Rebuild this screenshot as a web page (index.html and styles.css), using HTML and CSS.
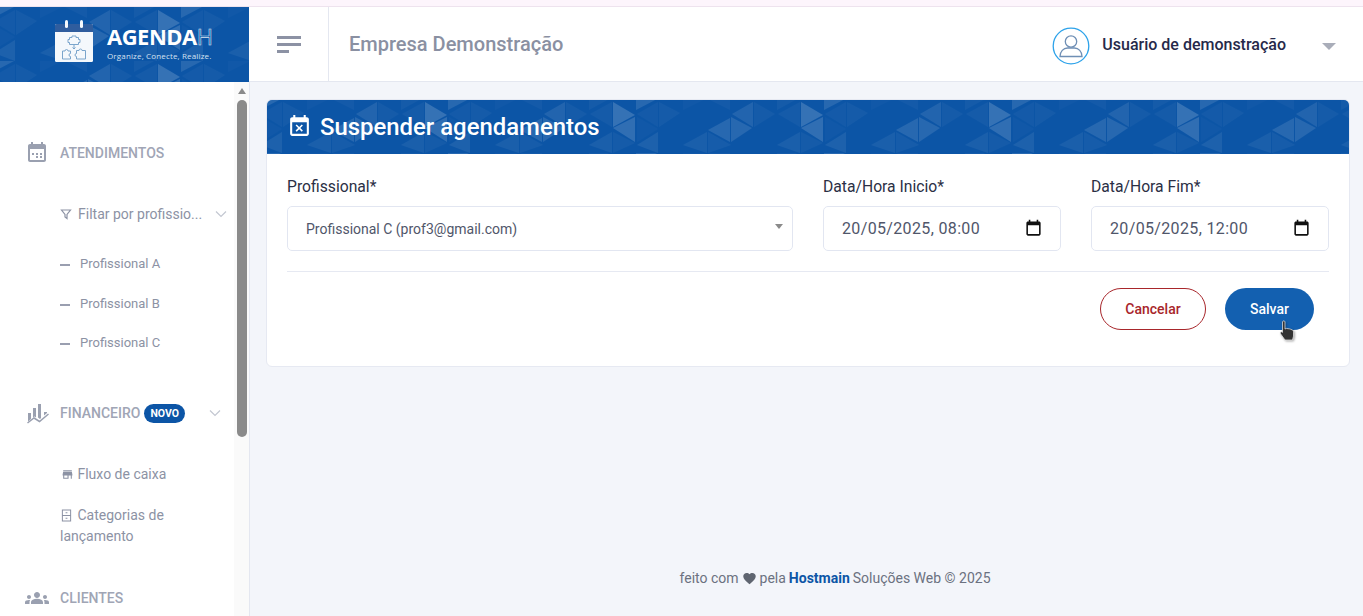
FILE: index.html
```html
<!DOCTYPE html>
<html lang="pt-BR">
<head>
    <meta charset="UTF-8">
    <meta name="viewport" content="width=device-width, initial-scale=1.0">
    <title>Suspender agendamentos</title>
    <link rel="stylesheet" href="styles.css">
</head>
<body>

<div class="top-strip"></div>

<header class="topbar">
    <div class="brand pattern">
        <svg class="brand-icon" viewBox="0 0 38 42" width="38" height="42">
            <rect x="0" y="4" width="38" height="38" rx="1.5" fill="#f4f8fc"/>
            <path d="M0 12V5.500A1.500 1.500 0 0 1 1.500 4H36.500A1.500 1.500 0 0 1 38 5.500V12Z" fill="#2f5d9e"/>
            <rect x="10" y="0" width="3" height="8" rx="1.500" fill="#f4f8fc"/>
            <rect x="25" y="0" width="3" height="8" rx="1.500" fill="#f4f8fc"/>
            <g fill="none" stroke="#7aa5cc" stroke-width="1">
                <path d="M17 17.500v-1.500h4v1.500h2.500v2h1.500v3h-1.500v2h-9v-2H13v-3h1.500v-2z"/>
                <path d="M7.500 31h2.500a1.500 1.500 0 1 1 3 0h2.500v2.500a1.500 1.500 0 1 0 0 3V39H7.500z"/>
                <path d="M21.500 30.500h2.500a1.500 1.500 0 1 1 3 0h3.500V39h-9v-2.500a1.500 1.500 0 1 1 0-3z"/>
                <path d="M19 25v4m-1.500-1.500L19 29l1.500-1.500"/>
            </g>
        </svg>
        <div class="brand-text">
            <div class="brand-name">AGENDA<span class="brand-h">H</span></div>
            <div class="brand-tag">Organize, Conecte, Realize.</div>
        </div>
    </div>
    <button class="menu-btn" aria-label="Menu">
        <span class="bar-long"></span>
        <span class="bar-long"></span>
        <span class="bar-short"></span>
    </button>
    <div class="company">Empresa Demonstração</div>
    <div class="user">
        <svg class="user-icon" viewBox="0 0 38 38" width="38" height="38">
            <circle cx="19" cy="19" r="17.800" fill="#fff" stroke="#2ea3ea" stroke-width="1.300"/>
            <circle cx="19" cy="14.500" r="5.700" fill="none" stroke="#6f8fb5" stroke-width="1.300"/>
            <path d="M8 29.500c0-5 3.500-8.500 7.500-8.500h7c4 0 7.500 3.500 7.500 8.500z" fill="none" stroke="#6f8fb5" stroke-width="1.300"/>
        </svg>
        <span class="user-name">Usuário de demonstração</span>
        <span class="user-caret"></span>
    </div>
</header>

<div class="shell">
    <aside class="sidebar">
        <nav class="nav">
            <div class="nav-title nav-title-first">
                <svg class="nav-icon" viewBox="0 0 24 24" width="24" height="24"><path d="M19 3h-1V1h-2v2H8V1H6v2H5C3.900 3 3 3.900 3 5v14c0 1.100.9 2 2 2h14c1.100 0 2-.9 2-2V5c0-1.100-.9-2-2-2zm0 16H5V8h14v11zM11 12h2v2h-2zM15 12h2v2h-2zM7 12h2v2H7zM11 15h2v2h-2zM15 15h2v2h-2z" fill="#9aa0b0"/></svg>
                <span>ATENDIMENTOS</span>
            </div>
            <div class="nav-filter">
                <svg class="filter-icon" viewBox="0 0 12 12" width="12" height="12"><path d="M1.500 2h9L7 6.500V10.500L5 9V6.500Z" fill="none" stroke="#8c92a4" stroke-width="1.200"/></svg>
                <span class="filter-text">Filtar por profissio...</span>
                <svg class="chevron" viewBox="0 0 12 8" width="12" height="8"><path d="M1 1.500l5 5 5-5" fill="none" stroke="#c3c7d1" stroke-width="1.200"/></svg>
            </div>
            <div class="nav-sub">Profissional A</div>
            <div class="nav-sub">Profissional B</div>
            <div class="nav-sub">Profissional C</div>

            <div class="nav-title nav-title-fin">
                <svg class="nav-icon" viewBox="0 0 24 24" width="24" height="24">
                    <path d="M3 12h3v6l-3 2.500zM8 7h3v9.500L9.500 15.500 8 16.500zM13 3h3v14l-1 1-2-1.500zM19 11h3v1l-3 2.500z" fill="#9aa0b0"/>
                    <path d="M2.500 22l6.500-5 5.500 3.500L23.500 13" fill="none" stroke="#9aa0b0" stroke-width="1.500"/>
                </svg>
                <span>FINANCEIRO</span>
                <span class="badge">NOVO</span>
                <svg class="chevron chevron-fin" viewBox="0 0 12 8" width="12" height="8"><path d="M1 1.500l5 5 5-5" fill="none" stroke="#c3c7d1" stroke-width="1.200"/></svg>
            </div>
            <div class="nav-link nav-link-first">
                <svg class="link-icon" viewBox="0 0 24 24" width="13" height="13"><path d="M20 4H4v2h16V4zm1 10v-2l-1-5H4l-1 5v2h1v6h10v-6h4v6h2v-6h1zm-9 4H6v-4h6v4z" fill="#8c92a4"/></svg>
                Fluxo de caixa
            </div>
            <div class="nav-link">
                <svg class="link-icon link-icon-cat" viewBox="0 0 12 14" width="11" height="13"><path d="M1.500 1h9v12h-9zM1.500 7h9M5 4h2M5 10h2" fill="none" stroke="#8c92a4" stroke-width="1.100"/></svg>
                Categorias de lançamento
            </div>

            <div class="nav-title nav-title-cli">
                <svg class="nav-icon" viewBox="0 0 24 24" width="24" height="24"><path d="M12 12.750c1.630 0 3.070.39 4.240.9 1.080.48 1.760 1.560 1.760 2.730V18H6v-1.610c0-1.180.68-2.260 1.760-2.730 1.170-.52 2.610-.91 4.240-.91zM4 13c1.100 0 2-.9 2-2s-.9-2-2-2-2 .9-2 2 .9 2 2 2zm1.130 1.100c-.37-.06-.74-.1-1.130-.1-.99 0-1.930.21-2.780.58C.48 14.900 0 15.620 0 16.430V18h4.500v-1.610c0-.83.23-1.610.63-2.290zM20 13c1.100 0 2-.9 2-2s-.9-2-2-2-2 .9-2 2 .9 2 2 2zm4 3.430c0-.81-.48-1.530-1.220-1.850-.85-.37-1.790-.58-2.780-.58-.39 0-.76.04-1.130.1.4.68.63 1.460.63 2.290V18H24v-1.570zM12 6c1.660 0 3 1.340 3 3s-1.340 3-3 3-3-1.340-3-3 1.340-3 3-3z" fill="#9aa0b0"/></svg>
                <span>CLIENTES</span>
            </div>
        </nav>
        <div class="side-scroll">
            <span class="side-arrow"></span>
            <span class="side-thumb"></span>
        </div>
    </aside>

    <main class="main">
        <section class="card">
            <div class="card-header pattern">
                <svg viewBox="0 0 24 24" width="25" height="25"><path d="M9.310 17l2.440-2.440L14.190 17l1.060-1.060-2.440-2.440 2.440-2.440L14.190 10l-2.440 2.440L9.310 10l-1.060 1.060 2.440 2.440-2.440 2.440L9.310 17zM19 3h-1V1h-2v2H8V1H6v2H5c-1.110 0-1.990.9-1.990 2L3 19c0 1.100.89 2 2 2h14c1.100 0 2-.9 2-2V5c0-1.100-.9-2-2-2zm0 16H5V8h14v11z" fill="#fff"/></svg>
                <h1>Suspender agendamentos</h1>
            </div>
            <div class="card-body">
                <div class="form-row">
                    <div class="field field-grow">
                        <label>Profissional*</label>
                        <div class="control control-select">
                            <span>Profissional C (prof3@gmail.com)</span>
                            <span class="select-caret"></span>
                        </div>
                    </div>
                    <div class="field field-date">
                        <label>Data/Hora Inicio*</label>
                        <div class="control control-date">
                            <span>20/05/2025, 08:00</span>
                            <svg viewBox="0 0 24 24" width="19" height="19"><path d="M19 3h-1V1h-2v2H8V1H6v2H5C3.900 3 3 3.900 3 5v14c0 1.100.9 2 2 2h14c1.100 0 2-.9 2-2V5c0-1.100-.9-2-2-2zm0 16H5V8h14v11z" fill="#111"/></svg>
                        </div>
                    </div>
                    <div class="field field-date">
                        <label>Data/Hora Fim*</label>
                        <div class="control control-date">
                            <span>20/05/2025, 12:00</span>
                            <svg viewBox="0 0 24 24" width="19" height="19"><path d="M19 3h-1V1h-2v2H8V1H6v2H5C3.900 3 3 3.900 3 5v14c0 1.100.9 2 2 2h14c1.100 0 2-.9 2-2V5c0-1.100-.9-2-2-2zm0 16H5V8h14v11z" fill="#111"/></svg>
                        </div>
                    </div>
                </div>
                <div class="actions">
                    <button class="btn btn-cancel">Cancelar</button>
                    <button class="btn btn-save">Salvar</button>
                </div>
            </div>
        </section>
        <footer class="footer">
            feito com
            <svg viewBox="0 0 24 24" width="15" height="15"><path d="M12 21.350l-1.450-1.320C5.400 15.360 2 12.280 2 8.500 2 5.420 4.420 3 7.500 3c1.740 0 3.410.81 4.500 2.090C13.090 3.810 14.760 3 16.500 3 19.580 3 22 5.420 22 8.500c0 3.780-3.400 6.860-8.550 11.540L12 21.350z" fill="#5f6570"/></svg>
            pela <b>Hostmain</b> Soluções Web © 2025
        </footer>
    </main>
</div>

<!-- ponteiro do mouse que aparece na captura -->
<svg class="mouse-hand" viewBox="0 0 17 21" width="17" height="21">
    <path d="M3.500 1.800c.2-1.200 2.300-1.200 2.500 0V9l1.500-.6 1.500.3 1.300.1 1.500.5 1.300.5c1 .4 1.400 1.200 1.400 2.300v4L13.500 20H6l-4.300-6c-.7-1-.3-2.200.7-2.200.4 0 .8.200 1.100.6z" fill="#333" stroke="#eee" stroke-width=".7"/>
</svg>

</body>
</html>
```

FILE: styles.css
```css
* {
    box-sizing: border-box;
}

html, body {
    height: 616px;
    overflow: hidden;
}

body {
    margin: 0;
    background-color: #f3f5fa;
    color: #2b2f45;
    font-family: Roboto, "Liberation Sans", sans-serif;
    display: flex;
    flex-direction: column;
}

/* Fundo azul com triangulos */
.pattern {
    background-color: #0c55a6;
    background-image: url("data:image/svg+xml,%3Csvg xmlns='http://www.w3.org/2000/svg' width='188' height='54'%3E%3Cg fill='white'%3E%3Cpath d='M0 3L22 16L0 28Z' fill-opacity='.17'/%3E%3Cpath d='M22 18L0 29L22 43Z' fill-opacity='.15'/%3E%3Cpath d='M23 11V0H44Z' fill-opacity='.11'/%3E%3Cpath d='M46 3L67 14L46 28Z' fill-opacity='.035'/%3E%3Cpath d='M45 3L24 15L45 28Z' fill-opacity='.03'/%3E%3Cpath d='M24 18V43L45 30Z' fill-opacity='.02'/%3E%3Cpath d='M45 33L24 46L45 54Z' fill-opacity='.07'/%3E%3Cpath d='M0 33L22 44L0 54Z' fill-opacity='.035'/%3E%3Cpath d='M117 19L95 31L117 43Z' fill-opacity='.11'/%3E%3Cpath d='M118 18L139 29L118 43Z' fill-opacity='.11'/%3E%3Cpath d='M140 3L119 15L140 28Z' fill-opacity='.09'/%3E%3Cpath d='M141 3L162 15L141 28Z' fill-opacity='.035'/%3E%3Cpath d='M94 33L70 46L94 54Z' fill-opacity='.06'/%3E%3Cpath d='M95 33L118 46L95 54Z' fill-opacity='.045'/%3E%3Cpath d='M187 3L165 15L187 28Z' fill-opacity='.035'/%3E%3Cpath d='M187 33L164 46L187 54Z' fill-opacity='.06'/%3E%3Cpath d='M70 0V11L92 0Z' fill-opacity='.02'/%3E%3Cpath d='M117 0H95L117 11Z' fill-opacity='.03'/%3E%3Cpath d='M164 0V11L184 0Z' fill-opacity='.035'/%3E%3C/g%3E%3C/svg%3E");
    background-position: 158px 0;
}

.top-strip {
    height: 7px;
    flex: none;
    background-color: #fdf5fc;
    border-bottom: 1px solid #eee3ee;
}

/* Barra superior */
.topbar {
    height: 75px;
    flex: none;
    display: flex;
    align-items: center;
    background-color: white;
    border-bottom: 1px solid #e4e7f0;
}

.brand {
    width: 249px;
    height: 75px;
    flex: none;
    display: flex;
    align-items: center;
    gap: 14px;
    padding: 0 0 0 55px;
}

.brand-icon {
    margin-bottom: 7px;
}

.brand-text {
    margin-bottom: 4px;
}

.brand-name {
    color: white;
    font-family: "Open Sans", sans-serif;
    font-weight: 700;
    font-size: 22px;
    line-height: 27px;
    letter-spacing: -.5px;
}

.brand-h {
    color: #0c55a6;
    font-weight: 400;
    -webkit-text-stroke: .6px #dbe6f3;
}

.brand-tag {
    color: #d5e2f1;
    font-family: "Open Sans", sans-serif;
    font-size: 8px;
    line-height: 11px;
    letter-spacing: .15px;
    white-space: nowrap;
}

.menu-btn {
    width: 80px;
    height: 74px;
    flex: none;
    padding: 0 0 0 28px;
    background: none;
    border: none;
    border-right: 1px solid #e4e7f0;
    display: flex;
    flex-direction: column;
    align-items: flex-start;
    justify-content: center;
    gap: 4px;
}

.bar-long, .bar-short {
    display: block;
    height: 3px;
    background-color: #8c92a4;
}

.bar-long {
    width: 24px;
}

.bar-short {
    width: 12px;
}

.company {
    margin-left: 20px;
    color: #8a90a2;
    font-size: 20px;
    font-weight: 500;
}

.user {
    margin-left: auto;
    display: flex;
    align-items: center;
    padding-right: 27px;
}

.user-icon {
    margin-top: 3px;
}

.user-name {
    margin-left: 12px;
    color: #26294a;
    font-size: 16px;
    font-weight: 500;
}

.user-caret {
    margin: 4px 0 0 36px;
    border-left: 7px solid transparent;
    border-right: 7px solid transparent;
    border-top: 7px solid #a9adb9;
}

/* Estrutura */
.shell {
    flex: 1;
    display: flex;
    min-height: 0;
}

/* Menu lateral */
.sidebar {
    position: relative;
    width: 250px;
    flex: none;
    overflow: hidden;
    background-color: white;
    border-right: 1px solid #e4e7f0;
}

.nav {
    width: 235px;
    padding-left: 27px;
    color: #8c92a4;
}

.nav-title {
    display: flex;
    align-items: center;
    height: 24px;
    color: #a0a5b5;
    font-size: 14px;
    font-weight: 500;
}

.nav-title-first {
    margin-top: 59px;
}

.nav-title-fin {
    margin-top: 48px;
}

.nav-title-cli {
    margin-top: 39px;
}

.nav-icon {
    flex: none;
    margin: 0 11px 0 -2px;
}

.nav-filter {
    display: flex;
    align-items: center;
    margin-top: 37px;
    padding-left: 33px;
    height: 24px;
    font-size: 14px;
    white-space: nowrap;
}

.filter-icon {
    margin-right: 6px;
}

.chevron {
    margin-left: 13px;
}

.chevron-fin {
    margin-left: 24px;
}

.nav-sub {
    position: relative;
    margin-left: 33px;
    padding-left: 20px;
    height: 20px;
    line-height: 20px;
    font-size: 13px;
    margin-top: 19.500px;
}

.nav-filter + .nav-sub {
    margin-top: 28px;
}

.nav-sub::before {
    content: "";
    position: absolute;
    left: 0;
    top: 10px;
    width: 10px;
    height: 2px;
    background-color: #9a9fb0;
}

.badge {
    margin-left: 4px;
    height: 19px;
    padding: 0 6px;
    border-radius: 10px;
    background-color: #0c55a6;
    color: white;
    font-size: 10.500px;
    font-weight: 700;
    line-height: 19px;
}

.nav-link {
    margin: 20px 0 0 33px;
    width: 130px;
    font-size: 14px;
    line-height: 21px;
}

.nav-link-first {
    margin-top: 39px;
    width: 140px;
}

.link-icon {
    vertical-align: -2px;
    margin: 0 0 0 1px;
}

.link-icon-cat {
    margin-right: 2px;
}

.side-scroll {
    position: absolute;
    top: 0;
    right: 0;
    bottom: 0;
    width: 15px;
    background-color: #fafafa;
}

.side-arrow {
    position: absolute;
    top: 6px;
    left: 4px;
    border-left: 4.500px solid transparent;
    border-right: 4.500px solid transparent;
    border-bottom: 6px solid #8a8a8a;
}

.side-thumb {
    position: absolute;
    top: 18px;
    left: 3px;
    width: 10px;
    height: 337px;
    border-radius: 5px;
    background-color: #8a8a8a;
}

/* Conteudo */
.main {
    flex: 1;
    display: flex;
    flex-direction: column;
    padding: 17px 13px 0 16px;
    min-width: 0;
}

.card {
    height: 268px;
    background-color: white;
    border: 1px solid #e6e9f2;
    border-radius: 6px;
    overflow: hidden;
}

.card-header {
    height: 55px;
    display: flex;
    align-items: center;
    gap: 8px;
    margin: -1px -1px 0;
    padding-left: 21px;
    color: white;
    background-position: 159px 0;
}

.card-header h1 {
    margin: 0;
    font-size: 23.900px;
    font-weight: 500;
}

.card-body {
    padding: 22px 20px 0;
}

.form-row {
    display: flex;
    gap: 30px;
    padding-bottom: 20px;
    border-bottom: 1px solid #e6e9f2;
}

.field-grow {
    flex: 1;
}

.field-date {
    width: 238px;
    flex: none;
}

.field label {
    display: block;
    margin-bottom: 8px;
    color: #2b2f45;
    font-size: 15.700px;
    line-height: 22px;
}

.control {
    display: flex;
    align-items: center;
    justify-content: space-between;
    height: 45px;
    background-color: white;
    border: 1px solid #e2e6f1;
    border-radius: 5px;
    color: #50566a;
}

.control-select {
    padding: 0 9px 0 18px;
    font-size: 14px;
}

.select-caret {
    margin-bottom: 4px;
    border-left: 4px solid transparent;
    border-right: 4px solid transparent;
    border-top: 5px solid #8a8a8a;
}

.control-date {
    padding: 0 17px 0 18px;
    font-size: 16px;
    letter-spacing: .35px;
}

.actions {
    display: flex;
    justify-content: flex-end;
    gap: 19px;
    padding: 16px 15px 0 0;
}

.btn {
    height: 42px;
    border-radius: 21px;
    font-family: inherit;
    font-size: 14px;
    font-weight: 500;
}

.btn-cancel {
    width: 106px;
    background-color: white;
    border: 1px solid #a8262b;
    color: #a8262b;
}

.btn-save {
    width: 89px;
    background-color: #1360b0;
    border: none;
    color: white;
}

.footer {
    margin-top: auto;
    height: 47px;
    padding-left: 54px;
    display: flex;
    justify-content: center;
    align-items: flex-start;
    gap: 3px;
    color: #6b7180;
    font-size: 14px;
    line-height: 18px;
}

.footer svg {
    margin-top: 2px;
}

.footer b {
    color: #0c55a6;
    font-weight: 700;
}

/* Cursor do mouse */
.mouse-hand {
    position: absolute;
    left: 1279px;
    top: 320px;
    filter: drop-shadow(1px 1px 1px rgba(0, 0, 0, .35));
}
```
